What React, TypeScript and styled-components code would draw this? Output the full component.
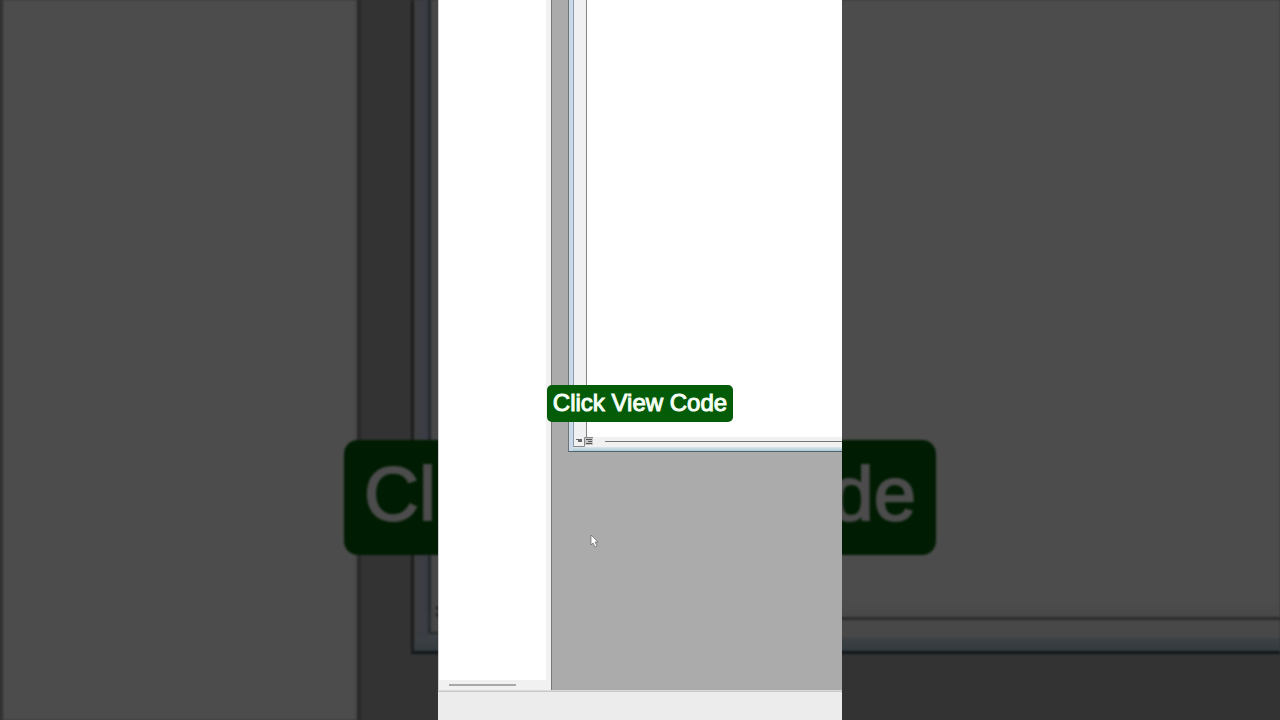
import React from "react";
import styled, { createGlobalStyle } from "styled-components";

const GlobalStyle = createGlobalStyle`
  * { box-sizing: border-box; }
  body { margin: 0; background: #333333; font-family: "Liberation Sans", Arial, sans-serif; }
`;

const Stage = styled.main`
  position: relative;
  display: flex;
  justify-content: center;
  min-height: 100vh;
  overflow: hidden;
`;

const Backdrop = styled.div`
  position: absolute;
  inset: 0;
  display: flex;
  background: #333333;
  filter: blur(1px);
`;

const DimSidebar = styled.div`
  flex: 0 0 361px;
  background: linear-gradient(90deg, #4c4c4c 350px, #454545 356px);
  border-left: 3px solid #323232;
  border-right: 4px solid #282828;
`;

const DimDesktop = styled.div`
  flex: 1;
  padding-left: 50px;
`;

const DimWindow = styled.div`
  display: flex;
  flex-direction: column;
  height: 654px;
  background: linear-gradient(90deg, #3e3e40, #3a3d43 8px, #3a3d43);
  border-left: 3px solid #1c1c1c;
  border-bottom: 3px solid #10161a;
`;

const DimClient = styled.div`
  position: relative;
  flex: 1;
  display: flex;
  flex-direction: column;
  justify-content: flex-end;
  margin-left: 14px;
  border-left: 3px solid #25292e;
  background: linear-gradient(90deg, #474747, #4c4c4c 20px);
`;

const DimScroll = styled.div`
  height: 21px;
  border-top: 3px solid #2b2b2b;
  background: #484848;
  box-shadow: 0 -8px 6px -2px #484848;
`;

const DimFrame = styled.div`
  height: 13px;
  background: linear-gradient(#3d4144, #333b40);
`;

const DimViewIcon = styled.svg`
  position: absolute;
  left: -3px;
  bottom: 0;
`;

const Video = styled.section`
  position: relative;
  display: flex;
  flex-direction: column;
  width: 404px;
  min-height: 100vh;
  background: #ababab;
`;

const Workspace = styled.div`
  flex: 1;
  display: flex;
`;

const Sidebar = styled.aside`
  display: flex;
  flex-direction: column;
  flex: 0 0 114px;
  border-left: 1px solid #d0d0d0;
  border-right: 1px solid #777777;
  background: #f1f1f1;
`;

const SidebarList = styled.div`
  flex: 1;
  margin-right: 5px;
  background: #ffffff;
`;

const SidebarScroll = styled.div`
  height: 10px;
  padding: 4px 0 0 10px;
`;

const SidebarThumb = styled.div`
  width: 67px;
  height: 2px;
  background: #a8a8a8;
`;

const Desktop = styled.div`
  position: relative;
  flex: 1;
  padding-left: 16px;
  background: #ababab;
`;

const CodeWindow = styled.div`
  display: flex;
  flex-direction: column;
  height: 452px;
  padding-left: 4px;
  border-left: 1px solid #6f7376;
  border-bottom: 1px solid #53646d;
  background: #cad9e8;
`;

const CodeClient = styled.div`
  flex: 1;
  display: flex;
  border-left: 1px solid #8b9bad;
  background: #ffffff;
`;

const Gutter = styled.div`
  width: 13px;
  border-right: 1px solid #858585;
  background: #f0eff1;
`;

const CodeFooter = styled.div`
  display: flex;
  height: 10px;
  border-left: 1px solid #8b9bad;
  background: #f1f1f1;
`;

const WindowBase = styled.div`
  height: 4px;
  background: linear-gradient(#dce8ed, #abc8d7);
`;

const ScrollLine = styled.div`
  flex: 1;
  height: 1px;
  margin: 4px 0 0 12px;
  background: #777777;
`;

const StatusBar = styled.footer`
  height: 30px;
  border-top: 1px solid #dadada;
  background: #ececec;
  box-shadow: inset 0 1px 0 #c9c9c9;
`;

const Caption = styled.div<{ $large?: boolean }>`
  position: absolute;
  left: 50%;
  top: ${(p) => (p.$large ? 440 : 385)}px;
  width: ${(p) => (p.$large ? 592 : 186)}px;
  height: ${(p) => (p.$large ? 115 : 37)}px;
  transform: translateX(-50%);
  border-radius: ${(p) => (p.$large ? 14 : 5)}px;
  background: ${(p) => (p.$large ? "#001c02" : "#045b08")};
  color: ${(p) => (p.$large ? "#4c4c4c" : "#f6fff5")};
  font-size: ${(p) => (p.$large ? 76 : 24)}px;
  line-height: ${(p) => (p.$large ? 108 : 35)}px;
  -webkit-text-stroke: ${(p) => (p.$large ? "2px" : "1px")} currentColor;
  text-align: center;
  white-space: nowrap;
`;

const Pointer = styled.svg`
  position: absolute;
  left: 38px;
  top: 534px;
`;

export default function App() {
  return (
    <>
      <GlobalStyle />
      <Stage>
        <Backdrop aria-hidden="true">
          <DimSidebar />
          <DimDesktop>
            <DimWindow>
              <DimClient>
                <DimScroll />
                <DimViewIcon width="14" height="48" viewBox="0 0 14 48">
                  <path d="M3 16h11v26H3z" fill="#464646" />
                  <path d="M8 18h6M8 25h6" stroke="#202020" strokeWidth="3" />
                  <path d="M0 43h14v5H0z" fill="#3c4145" />
                  <path d="M0 43h14" stroke="#292929" strokeWidth="2" />
                </DimViewIcon>
              </DimClient>
              <DimFrame />
            </DimWindow>
          </DimDesktop>
          <Caption $large>Click View Code</Caption>
        </Backdrop>
        <Video>
          <Workspace>
            <Sidebar>
              <SidebarList />
              <SidebarScroll>
                <SidebarThumb />
              </SidebarScroll>
            </Sidebar>
            <Desktop>
              <CodeWindow>
                <CodeClient>
                  <Gutter />
                </CodeClient>
                <CodeFooter>
                  <svg width="19" height="10" viewBox="0 0 19 10">
                    <path d="M0 9.5h10.5V.5H19" fill="none" stroke="#888888" />
                    <path d="M2 2h6v1H2zM4 3h4v2H4z" fill="#666666" />
                    <path d="M11 1h8v7h-8z" fill="#c6c6c6" />
                    <path d="M12 2h6v1h-6zM14 4h4v1h-4zM12 6h6v1h-6z" fill="#555555" />
                  </svg>
                  <ScrollLine />
                </CodeFooter>
                <WindowBase />
              </CodeWindow>
              <Pointer width="8" height="14" viewBox="0 0 8 14">
                <path d="M1 1v10l2-2 2 4 2-1-2-4h3z" fill="#ffffff" stroke="#666666" strokeWidth="0.7" />
              </Pointer>
            </Desktop>
          </Workspace>
          <StatusBar />
          <Caption>Click View Code</Caption>
        </Video>
      </Stage>
    </>
  );
}
